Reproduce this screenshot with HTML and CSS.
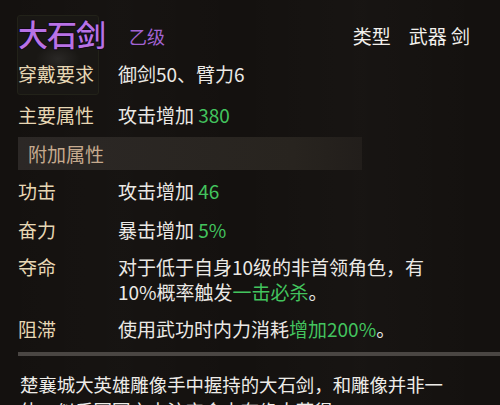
FILE: index.html
```html
<!DOCTYPE html>
<html lang="zh">
<head>
<meta charset="utf-8">
<title>大石剑</title>
<link rel="stylesheet" href="styles.css">
</head>
<body>
<div class="tooltip">
  <div class="icon-slot"></div>

  <div class="header">
    <span class="name">大石剑</span>
    <span class="grade">乙级</span>
    <span class="type"><span class="type-label">类型</span><span>武器 剑</span></span>
  </div>

  <div class="row r1"><span class="label">穿戴要求</span><span class="value">御剑50、臂力6</span></div>
  <div class="row r2"><span class="label">主要属性</span><span class="value">攻击增加 <em class="num">380</em></span></div>

  <div class="section">附加属性</div>

  <div class="row r3"><span class="label">功击</span><span class="value">攻击增加 <em class="num">46</em></span></div>
  <div class="row r4"><span class="label">奋力</span><span class="value">暴击增加 <em class="num">5%</em></span></div>
  <div class="row multi"><span class="label">夺命</span><span class="value">对于低于自身10级的非首领角色，有<br>10%概率触发<em class="num">一击必杀</em>。</span></div>
  <div class="row r5"><span class="label">阻滞</span><span class="value">使用武功时内力消耗<em class="num">增加200%</em>。</span></div>

  <div class="divider"></div>

  <p class="desc">楚襄城大英雄雕像手中握持的大石剑，和雕像并非一体，似乎冥冥之中注定会由有缘人获得。</p>
</div>
</body>
</html>
```

FILE: styles.css
```css
html, body {
  margin: 0;
  padding: 0;
  height: 100%;
  background: #14110f;
  overflow: hidden;
}

.tooltip {
  position: relative;
  height: 405px;
  padding-left: 18px;
  font-family: "Noto Sans CJK SC", "Noto Sans", sans-serif;
  color: #e9e7e3;
  background:
    linear-gradient(90deg, rgba(255,255,255,0) 0, rgba(255,255,255,0.012) 120px, rgba(255,255,255,0) 240px, rgba(255,255,255,0.015) 360px, rgba(255,255,255,0) 480px),
    #14110f;
}

/* item picture frame behind the name */
.icon-slot {
  position: absolute;
  left: 17px;
  top: 15px;
  width: 82px;
  height: 80px;
  border: 1px solid #222219;
  border-radius: 3px;
  background:
    radial-gradient(ellipse 22px 14px at 50% 55%, #2a2826 0, rgba(42,40,38,0) 100%),
    #191714;
  box-sizing: border-box;
}

.header {
  position: relative;
  display: flex;
  align-items: center;
  height: 42px;
  padding-top: 12px;
}

.name {
  font-size: 30px;
  font-weight: 500;
  line-height: 1;
  color: #b872e6;
  letter-spacing: -1px;
  text-shadow: 1px 0 0 #120a18, -1px 0 0 #120a18, 0 1px 0 #120a18, 0 -1px 0 #120a18;
}

.grade {
  margin-left: 24px;
  margin-top: 6px;
  font-size: 18px;
  color: #a263d4;
}

.type {
  margin-left: auto;
  margin-right: 30px;
  margin-top: 4px;
  display: flex;
  gap: 18px;
  font-size: 19px;
  color: #f2f0ec;
}

.row {
  position: relative;
  display: flex;
  align-items: center;
  font-size: 19px;
}

.r1 { height: 38px; }
.r2 { height: 45px; }
.r3 { height: 40px; }
.r4 { height: 38px; }
.r5 { height: 40px; }

.multi {
  align-items: flex-start;
  padding: 6px 0 4px;
  line-height: 25px;
}

.label {
  width: 100px;
  flex: none;
  color: #e7d7b4;
}

.value {
  color: #ebe9e5;
}

.num {
  font-style: normal;
  color: #43c45e;
}

.section {
  height: 33px;
  width: 344px;
  box-sizing: border-box;
  padding-left: 10px;
  display: flex;
  align-items: center;
  font-size: 19px;
  color: #c6aa8e;
  background: linear-gradient(90deg, #2c2826, #28241f 80%, #221e1b);
}

.divider {
  margin-top: 4px;
  height: 4px;
  background: #4a4643;
}

.desc {
  margin: 0;
  padding-top: 15px;
  padding-left: 2px;
  padding-right: 30px;
  font-size: 18.4px;
  line-height: 26px;
  color: #eeece8;
}
```
